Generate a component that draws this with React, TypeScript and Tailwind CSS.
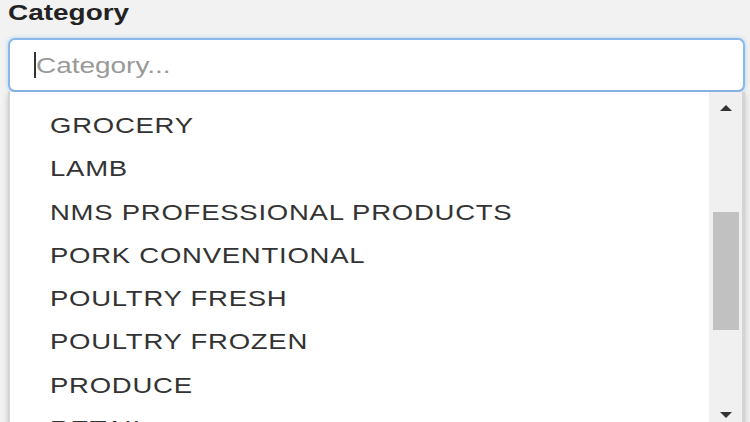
import React from 'react'

const items = [
  'GROCERY',
  'LAMB',
  'NMS PROFESSIONAL PRODUCTS',
  'PORK CONVENTIONAL',
  'POULTRY FRESH',
  'POULTRY FROZEN',
  'PRODUCE',
  'RETAIL',
]

const App: React.FC = () => {
  return (
    <div
      className="h-[422px] w-[750px] overflow-hidden bg-[#f2f2f2] pl-2 pr-[5px]"
      style={{ fontFamily: '"Liberation Sans", Arial, sans-serif' }}
    >
      <p className="h-[38px] origin-left scale-x-[1.27] text-[22px] font-bold leading-[26px] text-[#222]">Category</p>
      <div className="flex h-[54px] items-center rounded-[7px] border-2 border-[#8bb8e8] bg-white pl-[24px] shadow-[0_0_4px_rgba(102,175,233,0.5)]">
        <span className="h-[26px] w-[2px] bg-[#333]" />
        <span className="inline-block origin-left scale-x-[1.27] text-[22px] text-[#999]">Category...</span>
      </div>
      <div className="flex h-[340px] border-l-2 border-r-[3px] border-[#d4d4d4] bg-white shadow-[0_2px_6px_rgba(0,0,0,0.2)]">
        <div className="flex-1 overflow-hidden pl-[40px] pt-[21px]">
          {items.map((item) => (
            <div key={item} className="h-[43.3px] origin-left scale-x-[1.25] text-[22px] leading-[26px] tracking-[0.6px] text-[#333]">
              {item}
            </div>
          ))}
        </div>
        <div className="flex w-[33px] flex-col items-center bg-[#f0f0f0]">
          <div className="flex h-[30px] items-center justify-center pt-[2px]">
            <svg width="14" height="8" viewBox="0 0 14 8">
              <path d="M1 7 L7 1 L13 7 Z" fill="#333" />
            </svg>
          </div>
          <div className="h-[90px]" />
          <div className="h-[118px] w-[26px] bg-[#c1c1c1]" />
          <div className="flex-1" />
          <div className="flex h-[30px] items-center justify-center pb-[4px]">
            <svg width="14" height="8" viewBox="0 0 14 8">
              <path d="M1 1 L7 7 L13 1 Z" fill="#333" />
            </svg>
          </div>
        </div>
      </div>
    </div>
  )
}

export default App
